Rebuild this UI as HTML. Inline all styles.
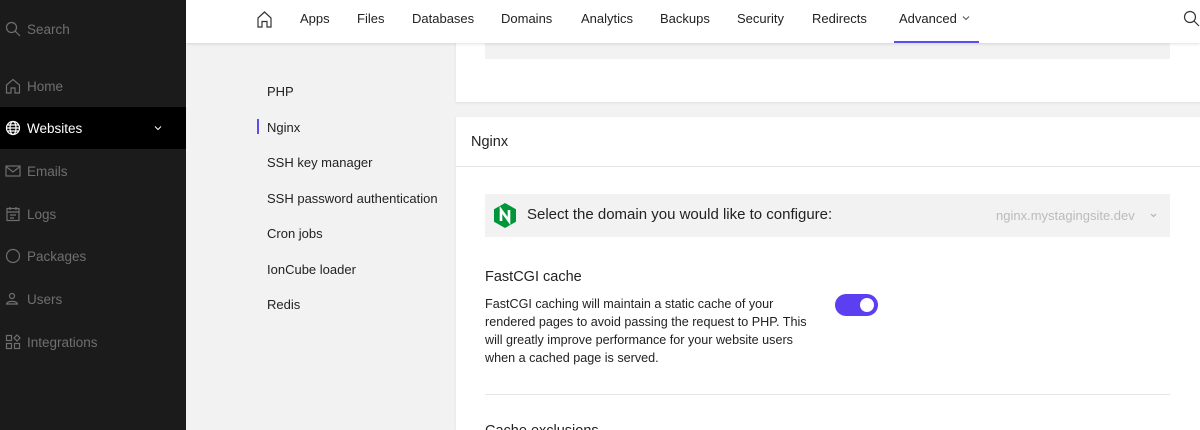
<!DOCTYPE html>
<html><head><meta charset="utf-8"><style>
*{box-sizing:border-box;margin:0;padding:0}
html,body{width:1200px;height:430px;overflow:hidden}
body{background:#f2f2f2;font-family:"Liberation Sans",sans-serif;position:relative;color:#222}
.sb{position:absolute;left:0;top:0;width:186px;height:430px;background:#1b1b1b}
.si{position:absolute;left:0;width:186px;height:42px;display:flex;align-items:center;color:#6f6f6f;font-size:13.5px}
.si svg{position:absolute;left:5px}
.si span{position:absolute;left:27px}
.top{position:absolute;left:186px;top:0;width:1014px;height:43px;background:#fff;box-shadow:0 1px 3px rgba(0,0,0,.12);z-index:2}
.nav{position:absolute;top:11px;font-size:13px;color:#222}
.card{position:absolute;left:456px;width:744px;background:#fff;box-shadow:0 1px 3px rgba(0,0,0,.08)}
.sub{position:absolute;left:267px;font-size:13px;color:#222}
</style></head><body>
<div class="sb">
 <div class="si" style="top:8px"><svg width="16" height="16" viewBox="0 0 16 16" fill="none" stroke="#6f6f6f" stroke-width="1.2"><circle cx="6.5" cy="6.5" r="5"/><path d="M10.2 10.2L15 15"/></svg><span>Search</span></div>
 <div class="si" style="top:65px"><svg width="16" height="16" viewBox="0 0 16 16" fill="none" stroke="#6f6f6f" stroke-width="1.2"><path d="M1.5 7L8 1.5 14.5 7V15H10V10H6V15H1.5Z"/></svg><span>Home</span></div>
 <div class="si" style="top:107px;background:#000;color:#fff"><svg width="16" height="16" viewBox="0 0 16 16" fill="none" stroke="#fff" stroke-width="1.2"><circle cx="8" cy="8" r="6.5"/><ellipse cx="8" cy="8" rx="3" ry="6.5"/><path d="M1.5 8H14.5M2.5 5H13.5M2.5 11H13.5"/></svg><span>Websites</span><svg style="left:154px" width="8" height="6" viewBox="0 0 8 6" fill="none" stroke="#fff"><path d="M1 1.5L4 4.5 7 1.5"/></svg></div>
 <div class="si" style="top:150px"><svg width="16" height="16" viewBox="0 0 16 16" fill="none" stroke="#6f6f6f" stroke-width="1.2"><rect x="1" y="3" width="14" height="10"/><path d="M1 3.5L8 9 15 3.5"/></svg><span>Emails</span></div>
 <div class="si" style="top:193px"><svg width="16" height="16" viewBox="0 0 16 16" fill="none" stroke="#6f6f6f" stroke-width="1.2"><rect x="2" y="2.5" width="12" height="12"/><path d="M2 6H14M5 1V4M11 1V4M5 9H11M5 12H9"/></svg><span>Logs</span></div>
 <div class="si" style="top:235px"><svg width="16" height="16" viewBox="0 0 16 16" fill="none" stroke="#6f6f6f" stroke-width="1.2"><circle cx="8" cy="8" r="6.5"/></svg><span>Packages</span></div>
 <div class="si" style="top:278px"><svg width="16" height="16" viewBox="0 0 16 16" fill="none" stroke="#6f6f6f" stroke-width="1.2"><circle cx="7" cy="5" r="2.5"/><path d="M1.5 13C2 9.5 12 9.5 12.5 13Z"/></svg><span>Users</span></div>
 <div class="si" style="top:321px"><svg width="16" height="16" viewBox="0 0 16 16" fill="none" stroke="#6f6f6f" stroke-width="1.2"><rect x="1.5" y="1.5" width="5" height="5"/><rect x="1.5" y="9.5" width="5" height="5"/><rect x="9.5" y="9.5" width="5" height="5"/><path d="M12 1L15 4 12 7 9 4Z"/></svg><span>Integrations</span></div>
</div>
<div class="top">
 <svg style="position:absolute;left:71px;top:11px" width="15" height="17" viewBox="0 0 15 17" fill="none" stroke="#333" stroke-width="1.2"><path d="M1 7L7.5 1 14 7V16H10V10.5H5V16H1Z"/></svg>
 <div class="nav" style="left:114px">Apps</div>
 <div class="nav" style="left:171px">Files</div>
 <div class="nav" style="left:226px">Databases</div>
 <div class="nav" style="left:315px">Domains</div>
 <div class="nav" style="left:395px">Analytics</div>
 <div class="nav" style="left:474px">Backups</div>
 <div class="nav" style="left:551px">Security</div>
 <div class="nav" style="left:626px">Redirects</div>
 <div class="nav" style="left:713px">Advanced</div>
 <svg style="position:absolute;left:776px;top:15px" width="8" height="6" viewBox="0 0 8 6" fill="none" stroke="#555"><path d="M1 1.5L4 4.5 7 1.5"/></svg>
 <div style="position:absolute;left:708px;top:41px;width:85px;height:2px;background:#5b4ef0"></div>
 <svg style="position:absolute;left:997px;top:10px" width="17" height="17" viewBox="0 0 17 17" fill="none" stroke="#333" stroke-width="1.2"><circle cx="7" cy="7" r="5.5"/><path d="M11 11L16 16"/></svg>
</div>
<div class="card" style="top:40px;height:62px"><div style="position:absolute;left:29px;top:0;width:685px;height:19px;background:#f2f2f2"></div></div>
<div class="sub" style="top:84px">PHP</div>
<div style="position:absolute;left:257px;top:119px;width:2px;height:15px;background:#5b4ef0"></div>
<div class="sub" style="top:120px">Nginx</div>
<div class="sub" style="top:155px">SSH key manager</div>
<div class="sub" style="top:191px">SSH password authentication</div>
<div class="sub" style="top:226px">Cron jobs</div>
<div class="sub" style="top:262px">IonCube loader</div>
<div class="sub" style="top:297px">Redis</div>
<div class="card" style="top:117px;height:313px">
 <div style="position:absolute;left:15px;top:17px;font-size:14.5px">Nginx</div>
 <div style="position:absolute;left:0;top:49px;width:744px;height:1px;background:#e6e6e6"></div>
 <div style="position:absolute;left:29px;top:77px;width:685px;height:43px;background:#f2f2f2">
  <svg style="position:absolute;left:9px;top:9px" width="22" height="25" viewBox="0 0 22 25"><path d="M11 0L22 6.25V18.75L11 25 0 18.75V6.25Z" fill="#009639"/><path d="M7 18V7L15 18V7" fill="none" stroke="#fff" stroke-width="2.6"/></svg>
  <div style="position:absolute;left:42px;top:12px;font-size:15px;color:#222">Select the domain you would like to configure:</div>
  <div style="position:absolute;left:511px;top:14px;font-size:13px;color:#bbb">nginx.mystagingsite.dev</div>
  <svg style="position:absolute;left:665px;top:19px" width="7" height="5" viewBox="0 0 7 5" fill="none" stroke="#aaa"><path d="M1 1L3.5 3.5 6 1"/></svg>
 </div>
 <div style="position:absolute;left:29px;top:152px;font-size:14.5px">FastCGI cache</div>
 <div style="position:absolute;left:29px;top:178px;width:340px;font-size:12.6px;line-height:18px;color:#222">FastCGI caching will maintain a static cache of your<br>rendered pages to avoid passing the request to PHP. This<br>will greatly improve performance for your website users<br>when a cached page is served.</div>
 <div style="position:absolute;left:379px;top:177px;width:43px;height:22px;border-radius:11px;background:#5b3ff0"><div style="position:absolute;right:4px;top:4px;width:14px;height:14px;border-radius:7px;background:#fff"></div></div>
 <div style="position:absolute;left:29px;top:277px;width:685px;height:1px;background:#e6e6e6"></div>
 <div style="position:absolute;left:29px;top:306px;font-size:14.5px">Cache exclusions</div>
</div>
</body></html>
